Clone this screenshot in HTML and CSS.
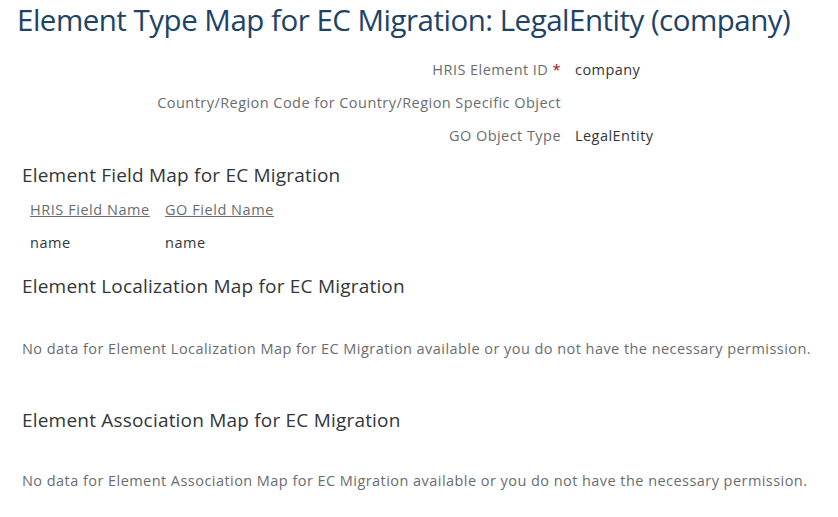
FILE: index.html
```html
<!DOCTYPE html>
<html lang="en">
<head>
    <meta charset="UTF-8">
    <title>Element Type Map for EC Migration</title>
    <link rel="stylesheet" href="styles.css">
</head>
<body>
    <div class="page">
        <h1 class="page-title">Element Type Map for EC Migration: LegalEntity (company)</h1>

        <div class="form-grid">
            <div class="form-label">HRIS Element ID <span class="required">*</span></div>
            <div class="form-value">company</div>

            <div class="form-label">Country/Region Code for Country/Region Specific Object</div>
            <div class="form-value"></div>

            <div class="form-label">GO Object Type</div>
            <div class="form-value">LegalEntity</div>
        </div>

        <div class="section section-fields">
            <h2 class="section-title">Element Field Map for EC Migration</h2>
            <div class="map-table">
                <a class="map-head" href="#">HRIS Field Name</a>
                <a class="map-head" href="#">GO Field Name</a>
                <div class="map-cell">name</div>
                <div class="map-cell">name</div>
            </div>
        </div>

        <div class="section section-local">
            <h2 class="section-title">Element Localization Map for EC Migration</h2>
            <p class="no-data">No data for Element Localization Map for EC Migration available or you do not have the necessary permission.</p>
        </div>

        <div class="section section-assoc">
            <h2 class="section-title">Element Association Map for EC Migration</h2>
            <p class="no-data">No data for Element Association Map for EC Migration available or you do not have the necessary permission.</p>
        </div>
    </div>
</body>
</html>
```

FILE: styles.css
```css
body {
    margin: 0;
    background-color: #fff;
    font-family: 'Open Sans', 'Noto Sans', Arial, sans-serif;
    color: #32363a;
}
.page {
    padding: 0 17px;
}
.page-title {
    margin: 0;
    font-size: 29.5px;
    letter-spacing: -0.5px;
    line-height: 40px;
    font-weight: normal;
    color: #1d4466;
    white-space: nowrap;
}

/* header fields */
.form-grid {
    display: grid;
    grid-template-columns: 544px auto;
    column-gap: 14px;
    margin-top: 13px;
    font-size: 14.5px;
    letter-spacing: 0.45px;
    line-height: 33px;
}
.form-label {
    text-align: right;
    color: #6a6d70;
}
.form-value {
    color: #32363a;
}
.required {
    color: #bb0000;
}

/* sections */
.section {
    padding-left: 5px;
}
.section-title {
    margin: 0;
    font-size: 19px;
    letter-spacing: 0.2px;
    line-height: 28px;
    font-weight: normal;
    color: #32363a;
}
.section-fields {
    margin-top: 9px;
}
.section-local {
    margin-top: 13px;
}
.section-assoc {
    margin-top: 47px;
}
.map-table {
    display: grid;
    grid-template-columns: 135px auto;
    margin: 4px 0 0 8px;
    font-size: 14.5px;
    letter-spacing: 0.55px;
    line-height: 33px;
}
.map-head {
    color: #6a6d70;
    text-decoration: underline;
    justify-self: start;
}
.map-cell {
    color: #32363a;
}
.no-data {
    margin: 39px 0 0;
    font-size: 14.5px;
    letter-spacing: 0.45px;
    line-height: 20px;
    color: #6a6d70;
    white-space: nowrap;
}
.section-assoc .no-data {
    margin-top: 37px;
}
```
